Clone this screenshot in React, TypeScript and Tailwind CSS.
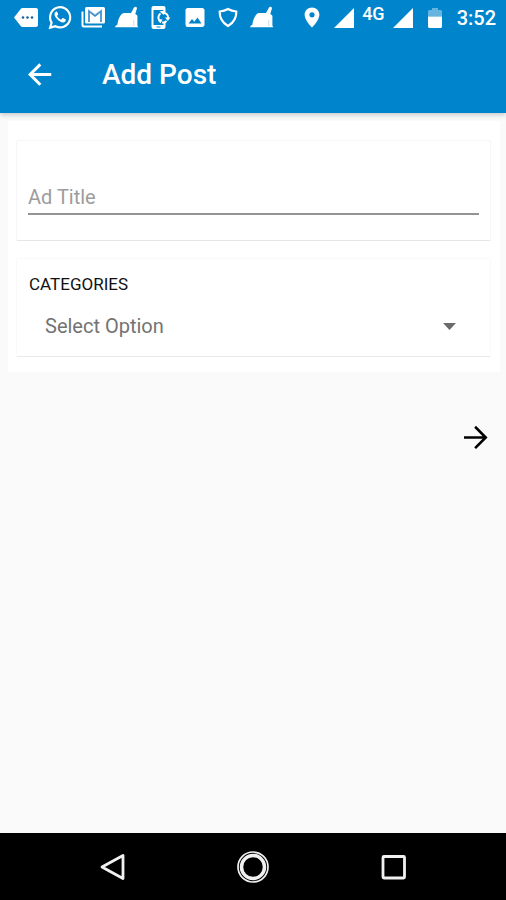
import React, { useState } from 'react';

type IconProps = { className?: string };

const MessageIcon = () => (
  <svg className="h-6 w-6" viewBox="0 0 24 24" fill="currentColor">
    <path d="M22 2H8.500c-.8 0-1.400.4-1.800 1L0 11.500l6.700 8.500c.4.600 1 1 1.800 1H22c1.100 0 2-.9 2-2V4c0-1.100-.9-2-2-2z" />
    <g fill="#1d5f9c">
      <circle cx="9" cy="11.500" r="1.300" />
      <circle cx="13.500" cy="11.500" r="1.300" />
      <circle cx="18" cy="11.500" r="1.300" />
    </g>
  </svg>
);

const WhatsAppIcon = () => (
  <svg className="h-6 w-6" viewBox="0 0 24 24" fill="currentColor">
    <path
      fillRule="evenodd"
      d="M12.200 0a11.300 11.300 0 0 0-9.800 16.900L.5 23.300l6.600-1.800A11.300 11.300 0 1 0 12.200 0zm0 2.300a9 9 0 1 1-4.700 16.700l-3.800 1 1.100-3.600A9 9 0 0 1 12.200 2.300z"
    />
    <path d="M9.200 6c-.3-.5-.5-.5-.8-.5-.7 0-1.900.9-1.900 2.700 0 1.500 1 3.200 2.500 4.800 2 2.200 4.200 3.400 6 3.400 1.600 0 2.800-1.200 2.800-2.500 0-.4-.1-.5-.4-.7l-2.200-1.100c-.4-.2-.6-.1-.9.200l-.9 1.100c-.2.200-.4.200-.7.100-1.400-.6-2.700-1.800-3.500-3.200-.2-.3-.1-.5.100-.7l.7-.8c.2-.3.200-.5.100-.8z" />
  </svg>
);

const MailIcon = () => (
  <svg className="h-6 w-6" viewBox="0 0 24 24" fill="none">
    <path d="M1.500 5.500v13.500c0 .8.600 1.500 1.500 1.500h18" stroke="currentColor" strokeWidth="2" />
    <rect x="4" y="1" width="20" height="16.500" rx="1.500" fill="currentColor" />
    <path d="M8 16V5.200l6 4.800 6-4.800V16" stroke="#3a8bc8" strokeWidth="1.700" />
    <path d="M7 3.500l7 5 7-5" stroke="#8fbfe2" strokeWidth="0.800" />
  </svg>
);

const CleanerIcon = () => (
  <svg className="h-6 w-6" viewBox="0 0 24 24" fill="currentColor">
    <path d="M16 7L19 1.500c.9-1.500 3.400-.6 2.900 1.100L20.300 8l1.400 1c.5.400.7.800.7 1.400v8.800c0 .8.300 1.300 1 2H0c.3-1.200 1.100-2 2.300-2.500.7-4.700 2-8.200 4.500-10.700.9-.8 1.800-1.100 3-1.100 2.200 0 4.300 0 6.200.1z" />
    <path d="M18.800 14v6" stroke="#c2e0f2" strokeWidth="1" fill="none" />
  </svg>
);

const PhoneSyncIcon = () => (
  <svg className="h-6 w-6" viewBox="0 0 24 24">
    <path
      fill="currentColor"
      fillRule="evenodd"
      d="M4.500 0h10c1.200 0 2 .8 2 2v4.500h-2V4h-10v15h10v-3h2v4.500c0 1.200-.8 2.500-2 2.500h-10c-1.200 0-2-1.300-2-2.500V2c0-1.200.8-2 2-2z"
    />
    <path fill="#0084cb" d="M7.500 20.500h4v1h-4z" />
    <g fill="none" stroke="currentColor" strokeWidth="2">
      <path d="M11.500 7.500a5 5 0 0 0 .5 8.500" />
      <path d="M13.500 6.700a5 5 0 0 1 5.700 5.300" />
      <path d="M13 16.500a5 5 0 0 0 4.500-1.500" />
    </g>
    <path fill="currentColor" d="M16 11.500h5.500l-2.700 3.500zM10.500 5.500l5-1-.5 4.500zM9 13l4.500.500-2.200 3.700z" />
  </svg>
);

const PictureIcon = () => (
  <svg className="h-6 w-6" viewBox="0 0 24 24" fill="currentColor">
    <path
      fillRule="evenodd"
      d="M21.500 4.200v14.600c0 1.200-1 2.200-2.200 2.200H4.700a2.200 2.200 0 0 1-2.200-2.200V4.200c0-1.200 1-2.200 2.200-2.200h14.600c1.200 0 2.200 1 2.200 2.200zM9 13l-3.500 4.500h13l-4-6-3.200 4.200z"
    />
  </svg>
);

const ShieldIcon = () => (
  <svg className="h-6 w-6" viewBox="0 0 24 24" fill="none" stroke="currentColor" strokeWidth="2.200">
    <path d="M12 3c2.500 1.600 5 2.300 8.300 2.500C20.500 11.500 17.500 16.800 12 20 6.500 16.800 3.500 11.500 3.700 5.500 7 5.300 9.500 4.600 12 3z" />
  </svg>
);

const PinIcon = () => (
  <svg className="h-6 w-6" viewBox="0 0 24 24" fill="currentColor">
    <path
      fillRule="evenodd"
      d="M12 1.500c-4.100 0-7.400 3.200-7.400 7.200 0 5.300 7.400 12.800 7.400 12.800s7.400-7.500 7.400-12.800c0-4-3.300-7.200-7.400-7.200zm0 4.700a2.600 2.600 0 1 1 0 5.200 2.600 2.600 0 0 1 0-5.200z"
    />
  </svg>
);

const SignalIcon = ({ className }: IconProps) => (
  <svg className={`h-5 w-5 ${className ?? ''}`} viewBox="0 0 20 20" fill="currentColor">
    <path d="M0 20L20 0v20z" />
  </svg>
);

const BatteryIcon = () => (
  <svg className="h-5 w-[14px]" viewBox="0 0 14 20" fill="currentColor">
    <path opacity="0.4" d="M4 0h6v2h2.500c.8 0 1.500.6 1.500 1.500V8.500H0v-5C0 2.600.7 2 1.500 2H4z" />
    <path d="M0 8.500h14v10c0 .8-.7 1.500-1.500 1.500h-11C.7 20 0 19.300 0 18.500z" />
  </svg>
);

const StatusBar = () => (
  <div className="flex h-9 items-center justify-between pl-[14px] pr-[10px]">
    <div className="flex w-[260px] items-center justify-between">
      <MessageIcon />
      <WhatsAppIcon />
      <MailIcon />
      <CleanerIcon />
      <PhoneSyncIcon />
      <PictureIcon />
      <ShieldIcon />
      <CleanerIcon />
    </div>
    <div className="flex items-center">
      <PinIcon />
      <SignalIcon className="ml-[10px]" />
      <span className="ml-2 mb-2 text-lg leading-5 font-medium">4G</span>
      <SignalIcon className="ml-2" />
      <span className="mx-[15px]">
        <BatteryIcon />
      </span>
      <span className="text-xl leading-6 font-medium">3:52</span>
    </div>
  </div>
);

const NavBar = () => (
  <nav className="flex h-[67px] items-center justify-center gap-[108px] bg-black text-[#f1f1f1]">
    <button type="button" aria-label="Back" className="cursor-pointer">
      <svg className="h-8 w-8" viewBox="0 0 32 32" fill="none" stroke="currentColor" strokeWidth="2.800">
        <path d="M26 4.500v23L5 16z" strokeLinejoin="round" />
      </svg>
    </button>
    <button type="button" aria-label="Home" className="cursor-pointer">
      <svg className="h-8 w-8" viewBox="0 0 32 32" fill="none" stroke="currentColor">
        <circle cx="16" cy="16" r="15" strokeWidth="1.700" />
        <circle cx="16" cy="16" r="11.500" strokeWidth="3.500" />
      </svg>
    </button>
    <button type="button" aria-label="Recent apps" className="cursor-pointer">
      <svg className="h-8 w-8" viewBox="0 0 32 32" fill="none" stroke="currentColor" strokeWidth="2.800">
        <rect x="6" y="5.500" width="21.500" height="21.500" rx="1" />
      </svg>
    </button>
  </nav>
);

export default function App() {
  const [title, setTitle] = useState('');
  const [category, setCategory] = useState('');

  return (
    <div className="flex min-h-screen flex-col bg-[#fafafa] font-[Roboto,sans-serif]">
      <header className="bg-[#0084cb] text-white shadow-[0_2px_5px_rgba(0,0,0,0.2)]">
        <StatusBar />
        <div className="flex h-[77px] items-center gap-[44px] pl-[22px]">
          <button type="button" aria-label="Go back" className="cursor-pointer">
            <svg className="h-9 w-9" viewBox="0 0 24 24" fill="currentColor">
              <path d="M19.500 10.700H7.830l5.090-5.090L11.500 4.200 4 11.700l7.500 7.500 1.410-1.410L7.830 12.700H19.500v-2z" />
            </svg>
          </button>
          <h1 className="text-[28px] leading-8 font-medium">Add Post</h1>
        </div>
      </header>

      <main className="flex-1">
        <form id="post-form" className="mt-2 mr-[6px] ml-2 flex flex-col gap-[17px] bg-white pt-[19px] pr-[9px] pb-[15px] pl-2">
          <div className="rounded-xs border border-[#f5f6f6] border-b-[#e6e6e6] px-[11px] pt-10 pb-[25px]">
            <input
              type="text"
              aria-label="Ad Title"
              placeholder="Ad Title"
              value={title}
              onChange={(e) => setTitle(e.target.value)}
              className="block h-[34px] w-full border-b-2 border-[#949494] text-xl leading-6 text-[#212121] outline-none placeholder:text-[#9c9c9c]"
            />
          </div>

          <div className="rounded-xs border border-[#f9f9f9] border-b-[#e9e9e9] px-3 pt-[15px] pb-[10px]">
            <label htmlFor="category" className="block text-[17px] leading-5 text-[#111]">
              CATEGORIES
            </label>
            <div className="mt-3 grid items-center">
              <select
                id="category"
                value={category}
                onChange={(e) => setCategory(e.target.value)}
                className="col-start-1 row-start-1 h-10 w-full cursor-pointer appearance-none pl-4 text-xl text-[#737373] outline-none"
              >
                <option value="">Select Option</option>
              </select>
              <svg
                className="pointer-events-none col-start-1 row-start-1 mr-[22px] h-[7px] w-[13px] justify-self-end text-[#6b6b6b]"
                viewBox="0 0 13 7"
                fill="currentColor"
              >
                <path d="M0 0h13L6.500 7z" />
              </svg>
            </div>
          </div>
        </form>

        <div className="mt-12 flex justify-end pr-3">
          <button type="submit" form="post-form" aria-label="Next" className="cursor-pointer text-black">
            <svg className="h-9 w-9" viewBox="0 0 24 24" fill="currentColor">
              <path d="M4 12.500h12.400l-5.600 5.600 1.200 1.200 7.700-7.700L12 3.900l-1.200 1.200 5.600 5.700H4z" />
            </svg>
          </button>
        </div>
      </main>

      <NavBar />
    </div>
  );
}
